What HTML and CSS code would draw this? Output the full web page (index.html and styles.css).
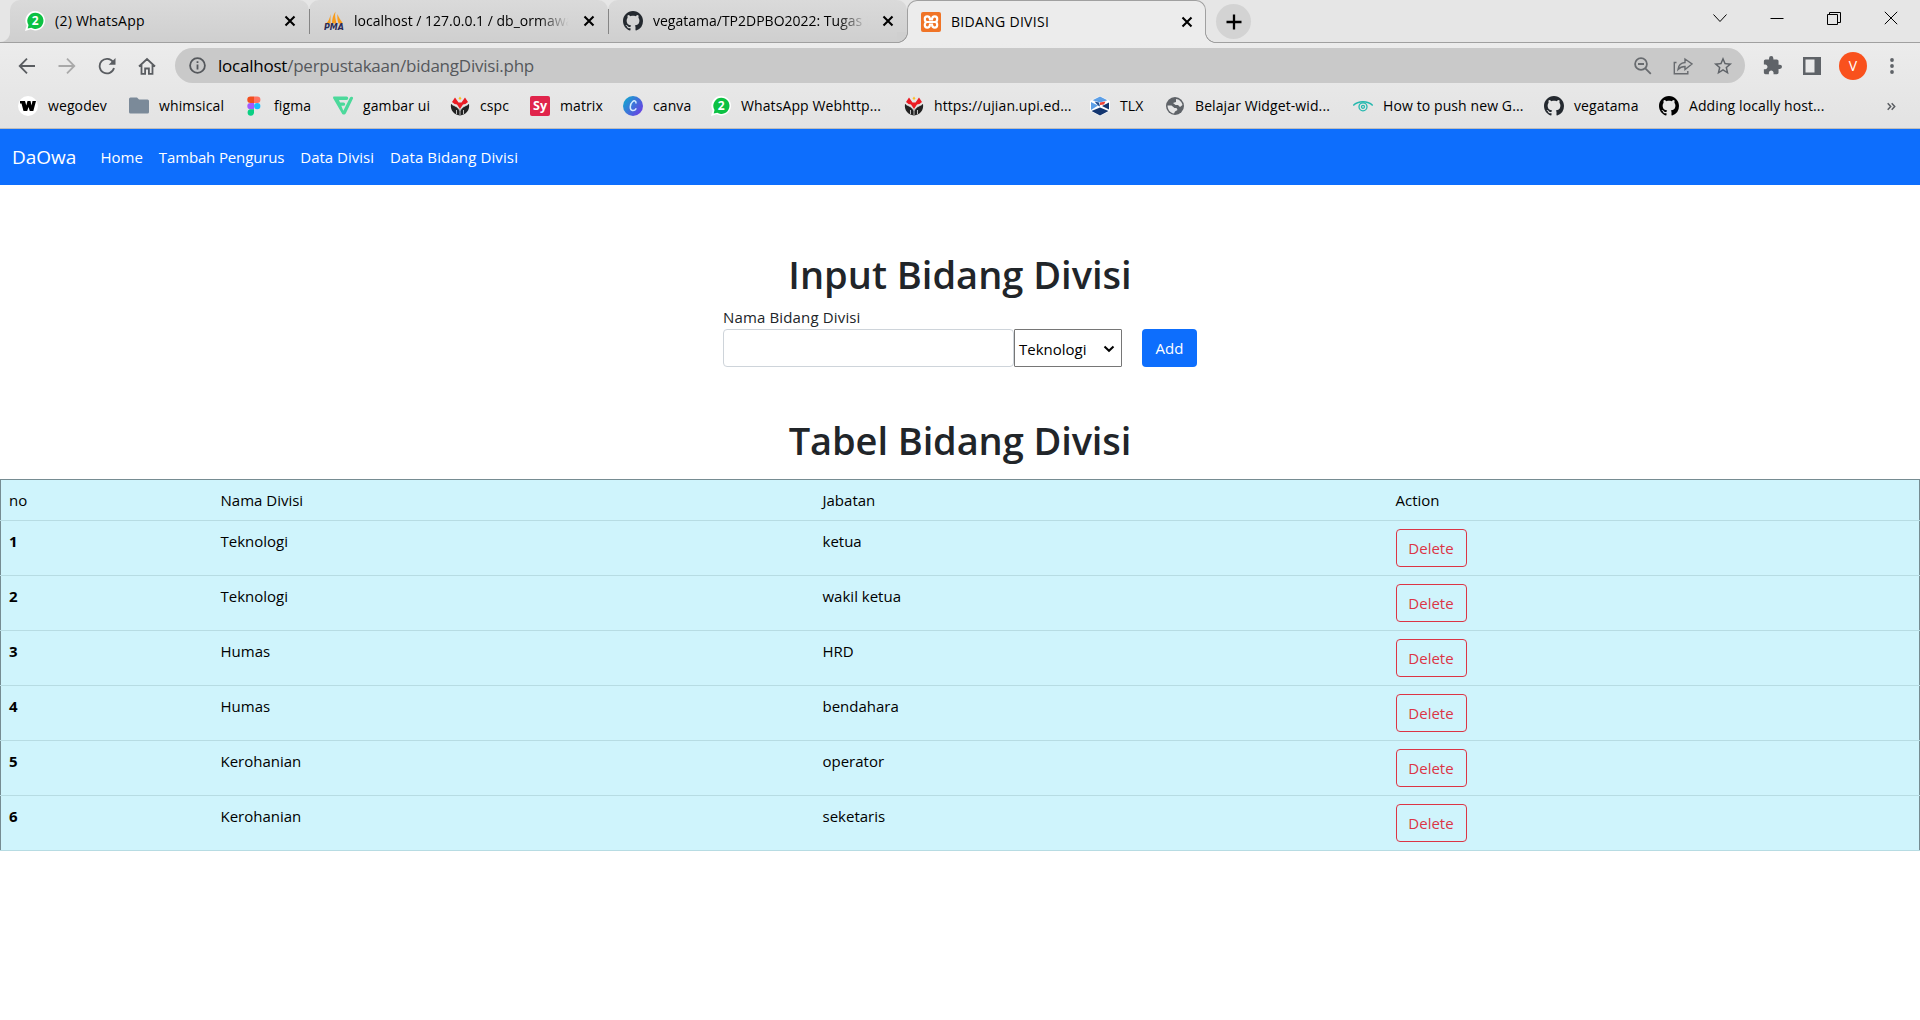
FILE: index.html
```html
<!DOCTYPE html>
<html lang="id">
<head>
<meta charset="utf-8">
<title>BIDANG DIVISI</title>
<link rel="stylesheet" href="styles.css">
</head>
<body>
<svg width="0" height="0" class="defs">
  <symbol id="github" viewBox="0 0 16 16"><path d="M8 0C3.58 0 0 3.58 0 8c0 3.54 2.29 6.53 5.47 7.59.4.07.55-.17.55-.38 0-.19-.01-.82-.01-1.49-2.01.37-2.53-.49-2.69-.94-.09-.23-.48-.94-.82-1.13-.28-.15-.68-.52-.01-.53.63-.01 1.08.58 1.23.82.72 1.21 1.87.87 2.33.66.07-.52.28-.87.51-1.07-1.78-.2-3.64-.89-3.64-3.95 0-.87.31-1.59.82-2.15-.08-.2-.36-1.02.08-2.12 0 0 .67-.21 2.2.82.64-.18 1.32-.27 2-.27s1.36.09 2 .27c1.53-1.04 2.2-.82 2.2-.82.44 1.1.16 1.92.08 2.12.51.56.82 1.27.82 2.15 0 3.07-1.87 3.75-3.65 3.95.29.25.54.73.54 1.48 0 1.07-.01 1.93-.01 2.2 0 .21.15.46.55.38A8.01 8.01 0 0 0 16 8c0-4.42-3.58-8-8-8z"/></symbol>
  <symbol id="whatsapp" viewBox="0 0 20 20"><path fill="#fff" d="M10.300 0a9.700 9.700 0 1 1-4.500 18.300L0 20l1.700-5.500A9.700 9.700 0 0 1 10.300 0z"/><path fill="#0cc143" d="M10.300 1.700a8.100 8.100 0 1 1-4 15.100L2.700 17.500l.8-3.500A8.100 8.100 0 0 1 10.300 1.700z"/></symbol>
  <symbol id="upi" viewBox="0 0 20 20"><path fill="#222" d="M1 8l6 3 3 3 3-3 6-3c1 6-3 11-9 11.500C4 19 0 14 1 8z"/><path fill="#eb1c24" d="M2 6l3-4.500 3.500 5h3L15 1.500 18 6l-2.500 2-2.500.5-3 4.500-3-4.500-2.500-.5z"/><path fill="#fbc02d" d="M10 .5l1.500 2L10 4 8.500 2.500z"/><path fill="none" stroke="#e6e6e6" stroke-width=".8" d="M2 8.500l5 2.500 3 3.500 3-3.500 5-2.500M10 14v5M6.500 14v4M13.500 14v4"/></symbol>
  <symbol id="close" viewBox="0 0 12 12"><path d="M1.500 1.500l9 9m0-9l-9 9" fill="none" stroke="#000" stroke-width="2.100"/></symbol>
</svg>

<header class="browser">
  <div class="tabstrip">
    <div class="tab first"><svg class="fav" viewBox="0 0 20 20"><use href="#whatsapp"/><text x="10.200" y="14.300" class="badge-digit">2</text></svg><span class="tab-title t-wa">(2) WhatsApp</span><svg class="x"><use href="#close"/></svg></div>
    <div class="tab"><svg class="fav" viewBox="0 0 20 20"><path fill="#f89c1c" d="M6.500 3v9.500H2c2.500-2 4-5.500 4.500-9.500zM11.500.5c-1 4 0 7.500 1 12H8c0-4 1-8.500 3.500-12zM13.500 3c1 3.500 3.500 6.500 5.500 9.500h-4.500c-1-3-1.500-6-1-9.500z"/><text x="10" y="18.600" class="pma">PMA</text></svg><span class="tab-title fade">localhost / 127.0.0.1 / db_ormawa</span><svg class="x"><use href="#close"/></svg></div>
    <div class="tab"><svg class="fav gh"><use href="#github"/></svg><span class="tab-title fade">vegatama/TP2DPBO2022: Tugas Pr</span><svg class="x"><use href="#close"/></svg></div>
    <div class="tab active"><svg class="fav" viewBox="0 0 20 20"><rect width="20" height="20" rx="2" fill="#f07427"/><path d="M9 7C8.500 3.500 3.800 3.700 3.800 7c0 1.800 1 3 2.200 3-1.200 0-2.200 1.200-2.200 3 0 3.300 4.700 3.500 5.200 0M11 7c.5-3.500 5.200-3.300 5.200 0 0 1.800-1 3-2.200 3 1.200 0 2.200 1.200 2.200 3 0 3.300-4.700 3.500-5.200 0M6 10h8M9 7v1.500M11 7v1.500M9 13v-1.500M11 13v-1.500" fill="none" stroke="#fff" stroke-width="2.200"/></svg><span class="tab-title t-act">BIDANG DIVISI</span><svg class="x"><use href="#close"/></svg></div>
    <div class="newtab"><svg width="16" height="16" viewBox="0 0 16 16"><path d="M8 .5v15M.5 8h15" stroke="#000" stroke-width="2.300"/></svg></div>
    <div class="window">
      <svg width="14" height="14" viewBox="0 0 14 14"><path d="M.5 3.500l6.500 7 6.500-7"/></svg>
      <svg width="14" height="14" viewBox="0 0 14 14"><path d="M.5 7.500h13"/></svg>
      <svg width="14" height="14" viewBox="0 0 14 14"><path d="M.5 3.500h10v10H.5zM2.500 3.500v-2h11v10h-3"/></svg>
      <svg width="14" height="14" viewBox="0 0 14 14"><path d="M.8 .8l12.400 12.400m0-12.400L.8 13.200"/></svg>
    </div>
  </div>

  <div class="toolbar">
    <div class="nav-icons">
      <svg viewBox="0 0 18 18"><path d="M17 9H2m7-7.300L1.700 9 9 16.300"/></svg>
      <svg class="dim" viewBox="0 0 18 18"><path d="M.5 9H16M9 1.700L16.300 9 9 16.300"/></svg>
      <svg viewBox="0 0 18 18"><path d="M15 5A7.300 7.300 0 1 0 16 11"/><path d="M17.500 1v6.800h-6.800z" class="solid"/></svg>
      <svg viewBox="0 0 18 18"><path d="M1 9.500L9 2l8 7.500M3.500 8v8.800h3.600v-5.300h3.800v5.300h3.600V8"/></svg>
    </div>
    <div class="omnibox">
      <svg class="info" viewBox="0 0 17 17"><circle cx="8.500" cy="8.500" r="7.400"/><path d="M8.500 7.500v5M8.500 4.300v1.800"/></svg>
      <span class="url">localhost<i>/perpustakaan/bidangDivisi.php</i></span>
      <div class="omni-icons">
        <svg viewBox="0 0 20 20"><circle cx="8" cy="8" r="5.900"/><path d="M12.300 12.300l5.500 5.500M5 8h6"/></svg>
        <svg viewBox="0 0 20 20"><path class="thin" d="M3.500 6.500H1.300v11.300h13.500V15"/><path class="thin" d="M5 13.500c.5-4.500 3-6.700 7-7V3l7 5-7 5.500V10.500c-3 0-5 .8-7 3z"/></svg>
        <svg class="star" viewBox="1 1 22 22"><path class="fill" d="M22 9.240l-7.190-.62L12 2 9.190 8.630 2 9.240l5.460 4.730L5.820 21 12 17.270 18.180 21l-1.630-7.030L22 9.240zM12 15.400l-3.760 2.270 1-4.280-3.320-2.880 4.380-.38L12 6.100l1.710 4.040 4.380.38-3.320 2.880 1 4.280L12 15.400z"/></svg>
      </div>
    </div>
    <div class="actions">
      <svg width="19" height="19" viewBox="1 1 22 22"><path fill="#5f6368" d="M20.500 11H19V7c0-1.100-.9-2-2-2h-4V3.500a2.500 2.500 0 0 0-5 0V5H4c-1.100 0-1.990.9-1.990 2v3.800H3.500c1.490 0 2.700 1.210 2.700 2.700s-1.210 2.700-2.700 2.700H2V20c0 1.100.9 2 2 2h3.800v-1.500c0-1.490 1.210-2.700 2.700-2.700s2.700 1.210 2.700 2.700V22H17c1.100 0 2-.9 2-2v-4h1.500a2.500 2.500 0 0 0 0-5z"/></svg>
      <svg width="18" height="18" viewBox="0 0 18 18"><path fill="#5f6368" fill-rule="evenodd" d="M0 0h18v18H0zM2.500 2.500v13h9v-13z"/></svg>
      <span class="avatar">V</span>
      <svg width="4" height="18" viewBox="0 0 4 18" fill="#5f6368"><circle cx="2" cy="3" r="1.900"/><circle cx="2" cy="9" r="1.900"/><circle cx="2" cy="15" r="1.900"/></svg>
    </div>
  </div>

  <div class="bookmarks">
    <div class="bm"><svg viewBox="0 0 20 20"><circle cx="10" cy="10" r="10" fill="#fff"/><path d="M2 5h5l1.300 4.500L9.500 5h3l1 4.500L14.500 5H18l-2.700 10h-3.500L10.500 11l-1.300 4H5.500L3.500 7.500H2z"/></svg><span>wegodev</span></div>
    <div class="bm"><svg viewBox="0 0 20 20"><path fill="#7b8a99" d="M1.500 1.500h6.500l2 2h8.500A1.500 1.500 0 0 1 20 5v11a1.500 1.500 0 0 1-1.500 1.500h-17A1.500 1.500 0 0 1 0 16V3a1.500 1.500 0 0 1 1.500-1.500z"/></svg><span>whimsical</span></div>
    <div class="bm"><svg viewBox="0 0 20 20"><path fill="#f24e1e" d="M10 .5H6.500a3.200 3.200 0 0 0 0 6.400H10z"/><path fill="#ff7262" d="M10 .5h3.200a3.200 3.200 0 0 1 0 6.400H10z"/><path fill="#a259ff" d="M10 6.900H6.500a3.200 3.200 0 0 0 0 6.400H10z"/><circle cx="13.200" cy="10.100" r="3.200" fill="#1abcfe"/><path fill="#0acf83" d="M10 13.300H6.500A3.200 3.200 0 1 0 10 16.600z"/></svg><span>figma</span></div>
    <div class="bm"><svg viewBox="0 0 20 20"><path fill="#4cd99b" d="M1 .5h12.500a1.500 1.500 0 0 1 0 3.500H6l1 2.500h3.500a1.500 1.500 0 0 1 0 3.300H8.300l2 5L17 1.500c.8-1.500 3.500-1 3 1L13 17c-1 2-3.500 2-4.300 0L.3 2.500C-.3 1.500.3.500 1 .5z"/></svg><span>gambar ui</span></div>
    <div class="bm"><svg><use href="#upi"/></svg><span>cspc</span></div>
    <div class="bm"><svg viewBox="0 0 20 20"><rect width="20" height="20" rx="2" fill="#e0244b"/><text x="10" y="14.300" class="sy">Sy</text></svg><span>matrix</span></div>
    <div class="bm"><svg viewBox="0 0 20 20"><defs><linearGradient id="cv" x1="0" x2="1" y1=".2" y2=".9"><stop offset="0" stop-color="#12a6cf"/><stop offset="1" stop-color="#7138e5"/></linearGradient></defs><circle cx="10" cy="10" r="10" fill="url(#cv)"/><path d="M13 7.500c.4-3-2-3.200-3.500-1.700C6.500 8.500 6.500 14 9.500 14.500c1.500.2 3-.8 3.800-2.200" fill="none" stroke="#d6ecff" stroke-width="1.500"/></svg><span>canva</span></div>
    <div class="bm"><svg viewBox="0 0 20 20"><use href="#whatsapp"/><text x="10.200" y="14.300" class="badge-digit">2</text></svg><span>WhatsApp Webhttp...</span></div>
    <div class="bm"><svg><use href="#upi"/></svg><span>https://ujian.upi.ed...</span></div>
    <div class="bm"><svg viewBox="0 0 20 20"><path fill="#fff" d="M10 0l10 5v10l-10 5-10-5V5z"/><path fill="#5d9fe6" d="M10 .5l7.500 3.800L10 6.500 2.500 4.300zM1 6l7 3.500L1 14z"/><path fill="#14366f" d="M1.500 15L10 11.500l8.500 3.500-8.500 4.500zM19 6.500v7l-7-3.500z"/><path fill="#ef4136" d="M10 6.500l5.500-1-1.500 3-4 .5z"/><path fill="#244f91" d="M4.500 5.500l4.500 1 1 4-2-1z"/></svg><span>TLX</span></div>
    <div class="bm"><svg viewBox="0 0 20 20"><circle cx="10" cy="10" r="9" fill="#5f6368"/><path fill="#e6e6e6" d="M11 3c3 0 6 3 6.500 6l-2.500 2-2-2h-2.500L8 7l3-1zM2.500 9.500h4l3 2.500h2l1 2-2.500 1.500-1 2C5 17 2.500 13 2.500 9.500z"/></svg><span>Belajar Widget-wid...</span></div>
    <div class="bm"><svg viewBox="0 0 20 20" fill="none" stroke="#24b8ae" stroke-width="1.300"><path d="M.3 9.500C5 4.500 15 4.500 19.700 9.500"/><circle cx="10" cy="10.800" r="4"/><circle cx="10" cy="10.800" r="1.500"/></svg><span>How to push new G...</span></div>
    <div class="bm"><svg class="gh"><use href="#github"/></svg><span>vegatama</span></div>
    <div class="bm"><svg><use href="#github"/></svg><span>Adding locally host...</span></div>
    <svg class="more" viewBox="0 0 9 9"><path d="M.7 1.200L3.700 4.500.7 7.800M4.700 1.200l3 3.300-3 3.300"/></svg>
  </div>
</header>

<nav class="navbar">
  <a class="brand">DaOwa</a><a>Home</a><a class="tight">Tambah Pengurus</a><a>Data Divisi</a><a class="wide">Data Bidang Divisi</a>
</nav>

<main>
  <h1>Input Bidang Divisi</h1>
  <form>
    <label for="nama">Nama Bidang Divisi</label>
    <div class="fields">
      <input id="nama" type="text">
      <div class="select"><span>Teknologi</span><svg width="12" height="8" viewBox="0 0 12 8"><path d="M1.500 1.500L6 5.800l4.500-4.300"/></svg></div>
      <button type="button" class="add">Add</button>
    </div>
  </form>
  <h1 class="second">Tabel Bidang Divisi</h1>
  <table>
    <colgroup><col class="c1"><col class="c2"><col class="c3"><col></colgroup>
    <thead><tr><td>no</td><td>Nama Divisi</td><td>Jabatan</td><td>Action</td></tr></thead>
    <tbody>
      <tr><th>1</th><td>Teknologi</td><td>ketua</td><td><button class="del">Delete</button></td></tr>
      <tr><th>2</th><td>Teknologi</td><td>wakil ketua</td><td><button class="del">Delete</button></td></tr>
      <tr><th>3</th><td>Humas</td><td>HRD</td><td><button class="del">Delete</button></td></tr>
      <tr><th>4</th><td>Humas</td><td>bendahara</td><td><button class="del">Delete</button></td></tr>
      <tr><th>5</th><td>Kerohanian</td><td>operator</td><td><button class="del">Delete</button></td></tr>
      <tr><th>6</th><td>Kerohanian</td><td>seketaris</td><td><button class="del">Delete</button></td></tr>
    </tbody>
  </table>
</main>
</body>
</html>
```
FILE: styles.css
```css
* { box-sizing: border-box; }
body { margin: 0; height: 1020px; overflow: hidden; background: #fff; color: #212529; font: 15px/24px "Open Sans", "Noto Sans", sans-serif; }
svg { flex: none; display: block; }
.defs { position: absolute; }

/* Browser chrome */
.browser { height: 129px; background: linear-gradient(#ececec 43px, #e3e3e3); border-bottom: 1px solid #bdbdbd; color: #000; }
.tabstrip { display: flex; height: 43px; padding-left: 10px; background: #e6e6e6; border-bottom: 1px solid #a0a0a0; }
.tab { display: flex; align-items: center; width: 299px; height: 42px; padding: 0 13px 0 15px; background: linear-gradient(#dadada, #cfcfcf); border-radius: 10px 10px 0 0; position: relative; font-size: 14px; }
.tab + .tab::before { content: ""; position: absolute; left: 0; top: 9px; width: 1px; height: 25px; background: #858585; }
.tab.first::before { content: ""; position: absolute; left: -10px; bottom: 0; width: 10px; height: 10px; background: radial-gradient(circle at 0 0, #e6e6e6 9.500px, #cfcfcf 10.500px); }
.tab.active { height: 43px; background: #ececec; border: 1px solid #a0a0a0; border-bottom: 0; padding: 0 12px 0 13px; }
/* Curved feet joining the active tab to the toolbar edge */
.tab.active::before, .tab.active::after { content: ""; position: absolute; top: auto; bottom: 0; width: 11px; height: 11px; }
.tab.active::before { left: -11px; background: radial-gradient(circle at 0 0, #cfcfcf 9.700px, #a0a0a0 10.200px, #a0a0a0 10.700px, #ececec 11.300px); }
.tab.active::after { right: -11px; background: radial-gradient(circle at 100% 0, #e6e6e6 9.700px, #a0a0a0 10.200px, #a0a0a0 10.700px, #ececec 11.300px); }
.fav { width: 20px; height: 20px; }
.tab-title { margin-left: 10px; flex: 1; white-space: nowrap; overflow: hidden; line-height: 20px; }
.t-wa { letter-spacing: .25px; }
.t-act { letter-spacing: .3px; }
.fade { -webkit-mask-image: linear-gradient(90deg, #000 84%, transparent 98%); mask-image: linear-gradient(90deg, #000 84%, transparent 98%); }
.x { width: 12px; height: 12px; margin-left: 10px; }
.gh { fill: #24292f; }
.badge-digit { font: 700 12px "Open Sans", sans-serif; fill: #fff; text-anchor: middle; }
.pma { font: italic 700 8px "DejaVu Sans", sans-serif; fill: #2b2b55; text-anchor: middle; }
.sy { font: 700 12.5px "Open Sans", sans-serif; fill: #fff; text-anchor: middle; }
.newtab { width: 35px; height: 35px; margin: 4px 0 0 10px; border-radius: 50%; background: #d3d3d3; display: flex; align-items: center; justify-content: center; }
.window { margin-left: auto; padding: 11px 22px 0 0; display: flex; gap: 43px; }
.window path { fill: none; stroke: #000; stroke-width: 1; }

.toolbar { display: flex; align-items: center; height: 45px; padding: 0 26px 0 18px; }
.nav-icons { display: flex; gap: 22px; width: 157px; }
.nav-icons svg { width: 18px; height: 18px; }
.nav-icons path { fill: none; stroke: #5a5d61; stroke-width: 1.8; }
.nav-icons .solid { fill: #5a5d61; stroke: none; }
.nav-icons .dim path { stroke: #a9a9a9; }
.omnibox { display: flex; align-items: center; width: 1570px; height: 35px; border-radius: 18px; background: #c9c9c9; padding: 0 12px 0 14px; }
.info { width: 17px; height: 17px; fill: none; stroke: #55585c; stroke-width: 1.8; }
.url { margin-left: 12px; font-size: 17px; letter-spacing: -.23px; flex: 1; }
.url i { font-style: normal; color: #55585c; }
.omni-icons { display: flex; gap: 20px; }
.omni-icons svg { width: 20px; height: 20px; fill: none; stroke: #686b6f; stroke-width: 1.8; }
.omni-icons .thin { stroke-width: 1.400; }
.omni-icons .fill { fill: #5f6368; stroke: none; }
.actions { margin-left: auto; display: flex; align-items: center; }
.actions svg + svg { margin-left: 21px; }
.avatar { width: 28px; height: 28px; margin: 0 23px 0 18px; border-radius: 50%; background: #f9511d; color: #fff; font-size: 14px; line-height: 28px; text-align: center; }

.bookmarks { display: grid; grid-template-columns: 111px 115px 89px 117px 80px 93px 88px 193px 186px 75px 188px 191px 115px 228px 9px; align-items: center; height: 36px; padding-left: 18px; font-size: 14px; letter-spacing: .1px; }
.bm { display: flex; align-items: center; gap: 10px; white-space: nowrap; }
.bm svg { width: 20px; height: 20px; }
.bm span { line-height: 20px; }
.more { width: 9px; height: 9px; fill: none; stroke: #5a5d61; stroke-width: 1.5; }

/* Page */
.navbar { display: flex; align-items: center; height: 56px; padding-left: 12px; background: #0d6efd; color: #fff; gap: 16px; white-space: nowrap; }
.brand { font-size: 19px; margin-right: 8px; }
.tight { letter-spacing: -.14px; }
.wide { letter-spacing: .12px; }
h1 { margin: 65px 0 7px; font-size: 38px; line-height: 48px; font-weight: 600; text-align: center; }
form { width: 474px; margin: 0 auto; }
label { display: block; height: 24px; letter-spacing: .15px; }
.fields { display: flex; height: 38px; }
input { width: 291px; height: 38px; border: 1px solid #ced4da; border-radius: 4px; padding: 6px 12px; }
.select { display: flex; align-items: center; justify-content: space-between; width: 108px; padding: 2px 6px 0 4px; border: 1px solid #767676; border-radius: 1px; color: #000; }
.select path { fill: none; stroke: #000; stroke-width: 2; }
button { font: inherit; padding: 0; border-radius: 4px; }
.add { width: 55px; height: 38px; margin-left: 20px; border: 0; background: #0d6efd; color: #fff; }
h1.second { margin: 49px 0 15px; letter-spacing: -.1px; }
table { width: 1920px; table-layout: fixed; border-collapse: collapse; background: #cff4fc; color: #000; border: 1px solid #768c92; }
.c1 { width: 212px; }
.c2 { width: 602px; }
.c3 { width: 573px; }
td, th { padding: 8px; text-align: left; vertical-align: top; border-bottom: 1px solid #b7dce3; line-height: 24px; }
th { font-weight: 700; }
tbody tr { height: 55px; }
td button { display: block; }
.del { width: 71px; height: 38px; border: 1px solid #dc3545; background: none; color: #dc3545; }
```
